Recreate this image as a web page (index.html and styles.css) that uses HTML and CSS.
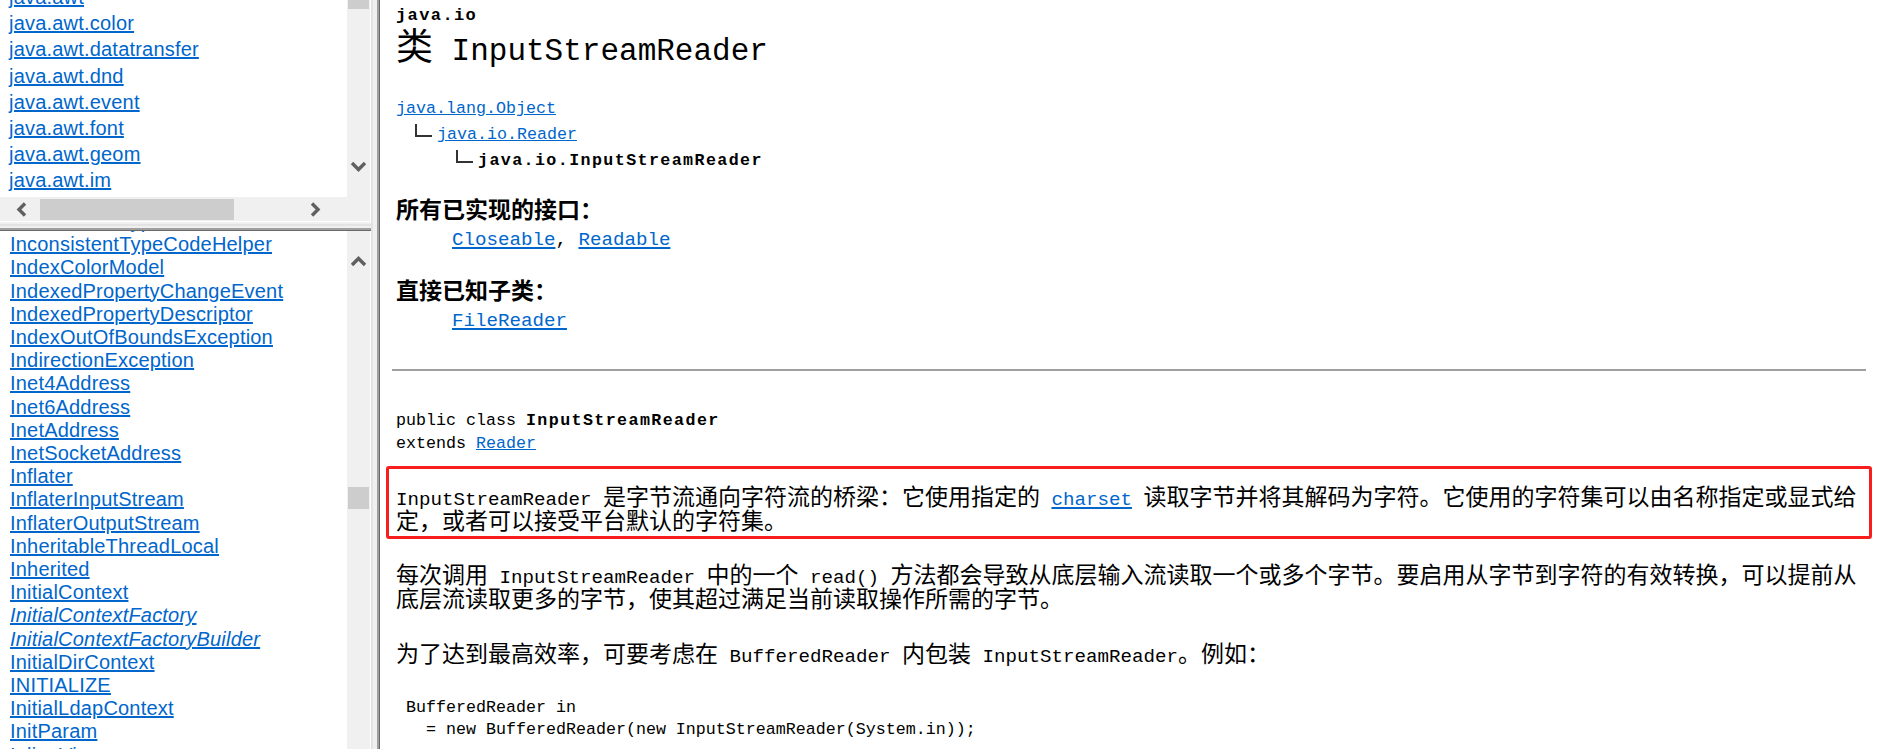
FILE: index.html
```html
<!DOCTYPE html>
<html lang="zh-CN">
<head>
    <meta charset="UTF-8">
    <title>InputStreamReader (Java Platform SE 6)</title>
    <link rel="stylesheet" href="styles.css">
</head>
<body>
<div class="page">
    <div class="nav">
        <div class="frame frame-top">
            <div class="frame-main">
                <div class="frame-view">
                    <ul class="pkg-list">
                        <li><a href="#">java.awt</a></li>
                        <li><a href="#">java.awt.color</a></li>
                        <li><a href="#">java.awt.datatransfer</a></li>
                        <li><a href="#">java.awt.dnd</a></li>
                        <li><a href="#">java.awt.event</a></li>
                        <li><a href="#">java.awt.font</a></li>
                        <li><a href="#">java.awt.geom</a></li>
                        <li><a href="#">java.awt.im</a></li>
                        <li><a href="#">java.awt.im.spi</a></li>
                    </ul>
                </div>
                <div class="vscroll">
                    <div class="thumb thumb-top"></div>
                    <svg class="arrow arrow-down" width="17" height="13" viewBox="0 0 17 13"><polyline points="2,3 8.5,9.5 15,3"/></svg>
                </div>
            </div>
            <div class="hscroll">
                <svg class="arrow arrow-left" width="14" height="15" viewBox="0 0 14 15"><polyline points="10,1.5 4,7.5 10,13.5"/></svg>
                <div class="thumb thumb-h"></div>
                <svg class="arrow arrow-right" width="14" height="15" viewBox="0 0 14 15"><polyline points="4,1.5 10,7.5 4,13.5"/></svg>
            </div>
        </div>
        <div class="hsplit"></div>
        <div class="frame frame-bottom">
            <div class="frame-view">
                <ul class="class-list">
                    <li><a href="#">InconsistentTypeCode</a></li>
                    <li><a href="#">InconsistentTypeCodeHelper</a></li>
                    <li><a href="#">IndexColorModel</a></li>
                    <li><a href="#">IndexedPropertyChangeEvent</a></li>
                    <li><a href="#">IndexedPropertyDescriptor</a></li>
                    <li><a href="#">IndexOutOfBoundsException</a></li>
                    <li><a href="#">IndirectionException</a></li>
                    <li><a href="#">Inet4Address</a></li>
                    <li><a href="#">Inet6Address</a></li>
                    <li><a href="#">InetAddress</a></li>
                    <li><a href="#">InetSocketAddress</a></li>
                    <li><a href="#">Inflater</a></li>
                    <li><a href="#">InflaterInputStream</a></li>
                    <li><a href="#">InflaterOutputStream</a></li>
                    <li><a href="#">InheritableThreadLocal</a></li>
                    <li><a href="#">Inherited</a></li>
                    <li><a href="#">InitialContext</a></li>
                    <li><a href="#"><i>InitialContextFactory</i></a></li>
                    <li><a href="#"><i>InitialContextFactoryBuilder</i></a></li>
                    <li><a href="#">InitialDirContext</a></li>
                    <li><a href="#">INITIALIZE</a></li>
                    <li><a href="#">InitialLdapContext</a></li>
                    <li><a href="#">InitParam</a></li>
                    <li><a href="#">InlineView</a></li>
                </ul>
            </div>
            <div class="vscroll">
                <svg class="arrow arrow-up" width="17" height="13" viewBox="0 0 17 13"><polyline points="2,10 8.5,3.5 15,10"/></svg>
                <div class="thumb thumb-bottom"></div>
            </div>
        </div>
    </div>
    <div class="vsplit"></div>

    <main class="content">
        <div class="pkg-label">java.io</div>
        <h1 class="class-title">类<span class="title-name"> InputStreamReader</span></h1>

        <div class="inherit-tree">
            <div class="tree-row"><a href="#">java.lang.Object</a></div>
            <div class="tree-row level-1"><span class="branch"></span><a href="#">java.io.Reader</a></div>
            <div class="tree-row level-2"><span class="branch"></span><b class="strong">java.io.InputStreamReader</b></div>
        </div>

        <dl class="summary">
            <dt>所有已实现的接口：</dt>
            <dd><a href="#"><code>Closeable</code></a><code>, </code><a href="#"><code>Readable</code></a></dd>
            <dt>直接已知子类：</dt>
            <dd><a href="#"><code>FileReader</code></a></dd>
        </dl>

        <hr class="rule">

        <div class="signature">public class <b class="strong">InputStreamReader</b><br>extends <a href="#">Reader</a></div>

        <p class="desc highlight"><code>InputStreamReader</code> 是字节流通向字符流的桥梁：它使用指定的 <a href="#"><code>charset</code></a> 读取字节并将其解码为字符。它使用的字符集可以由名称指定或显式给定，或者可以接受平台默认的字符集。</p>

        <p class="desc para-2">每次调用 <code>InputStreamReader</code> 中的一个 <code>read()</code> 方法都会导致从底层输入流读取一个或多个字节。要启用从字节到字符的有效转换，可以提前从底层流读取更多的字节，使其超过满足当前读取操作所需的字节。</p>

        <p class="desc para-3">为了达到最高效率，可要考虑在 <code>BufferedReader</code> 内包装 <code>InputStreamReader</code>。例如：</p>

        <pre class="example"> BufferedReader in
   = new BufferedReader(new InputStreamReader(System.in));</pre>
    </main>
</div>
</body>
</html>
```

FILE: styles.css
```css
* {
    box-sizing: border-box;
}

html, body {
    margin: 0;
    height: 100%;
}

body {
    overflow: hidden;
    background-color: #fff;
}

a {
    color: #0066cc;
    text-decoration: underline;
}

.page {
    display: flex;
    height: 749px;
}

/* left frames */
.nav {
    width: 373px;
    flex: none;
    display: flex;
    flex-direction: column;
    background-color: #f0f0f0;
    border-right: 2px solid #e3e3e3;
}

.frame {
    display: flex;
    border-right: 1px solid #fff;
}

.frame-top {
    height: 221px;
    flex-direction: column;
}

.frame-main {
    height: 197px;
    display: flex;
}

.frame-bottom {
    flex: 1;
    min-height: 0;
}

.frame-view {
    width: 347px;
    flex: none;
    background-color: #fff;
    overflow: hidden;
}

.vscroll {
    width: 23px;
    flex: none;
    position: relative;
    background-color: #f0f0f0;
}

.hscroll {
    height: 24px;
    position: relative;
    background-color: #f0f0f0;
}

.thumb {
    position: absolute;
    background-color: #cdcdcd;
}

.thumb-top {
    top: 0;
    left: 1px;
    width: 21px;
    height: 9px;
}

.thumb-bottom {
    top: 256px;
    left: 1px;
    width: 21px;
    height: 22px;
}

.thumb-h {
    top: 2px;
    left: 40px;
    width: 194px;
    height: 21px;
}

.arrow {
    position: absolute;
    fill: none;
    stroke: #606060;
    stroke-width: 3.4;
}

.arrow-down {
    left: 3px;
    top: 160px;
}

.arrow-up {
    left: 3px;
    top: 24px;
}

.arrow-left {
    left: 15px;
    top: 5px;
}

.arrow-right {
    left: 308px;
    top: 5px;
}

.hsplit {
    height: 10px;
    flex: none;
    background: linear-gradient(#fff 0 1px, #f0f0f0 1px 3px, #e3e3e3 3px 5px, #f0f0f0 5px 7px, #a0a0a0 7px 9px, #696969 9px 10px);
}

.vsplit {
    width: 7px;
    flex: none;
    background: linear-gradient(to right, #f0f0f0 0 4px, #a0a0a0 4px 6px, #696969 6px 7px);
}

.pkg-list,
.class-list {
    list-style: none;
    margin: 0;
    font-family: "Liberation Sans", Arial, sans-serif;
    font-size: 20px;
    letter-spacing: 0.2px;
    white-space: nowrap;
}

.pkg-list {
    margin-top: -16px;
    padding-left: 9px;
    line-height: 26.2px;
}

.class-list {
    margin-top: -21px;
    padding-left: 10px;
    line-height: 23.2px;
}

/* class page */
.content {
    flex: 1;
    min-width: 0;
    overflow: hidden;
    padding: 4px 14px 0 16px;
    font-family: "Liberation Mono", "Noto Sans CJK SC", monospace;
    font-size: 23px;
    line-height: 24px;
    color: #000;
    word-spacing: -2.3px;
}

.content code {
    font-family: "Liberation Mono", monospace;
    font-size: 19.17px;
    line-height: 20px;
    word-spacing: 0;
}

.strong {
    font-weight: bold;
    letter-spacing: 1.4px;
}

.pkg-label {
    font-size: 17px;
    font-weight: bold;
    letter-spacing: 1.4px;
    line-height: 24px;
}

.class-title {
    margin: 0;
    font-size: 37px;
    font-weight: normal;
    line-height: 44px;
}

.title-name {
    font-size: 31px;
    line-height: 1;
    word-spacing: 0;
}

.inherit-tree {
    margin-top: 24px;
    font-size: 16.67px;
    line-height: 26px;
    word-spacing: 0;
    white-space: nowrap;
}

.level-1 {
    padding-left: 19px;
}

.level-2 {
    padding-left: 60px;
}

.branch {
    display: inline-block;
    width: 17px;
    height: 13px;
    margin: 0 5px 2px 0;
    border-left: 2px solid #333;
    border-bottom: 2px solid #333;
}

.summary {
    margin: 0;
}

.summary dt {
    margin-top: 26px;
    font-weight: bold;
    line-height: 25px;
}

.summary dt + dd + dt {
    margin-top: 29px;
}

.summary dd {
    margin: 1px 0 0 56px;
    line-height: 26px;
}

.rule {
    height: 0;
    margin: 36px 0 0 -4px;
    border: 0;
    border-top: 2px solid #a0a0a0;
}

.signature {
    margin-top: 38px;
    font-size: 16.67px;
    line-height: 23px;
    word-spacing: 0;
}

.desc {
    margin: 0;
}

.highlight {
    margin: 11px -6px 0 -10px;
    padding: 17.6px 7px 1.4px 7px;
    border: 3px solid #f81e1e;
    border-radius: 3px;
}

.para-2 {
    margin-top: 25.6px;
}

.para-3 {
    margin-top: 31.7px;
}

.example {
    margin: 28.5px 0 0;
    font-family: "Liberation Mono", monospace;
    font-size: 16.67px;
    line-height: 22.5px;
    word-spacing: 0;
}
```
